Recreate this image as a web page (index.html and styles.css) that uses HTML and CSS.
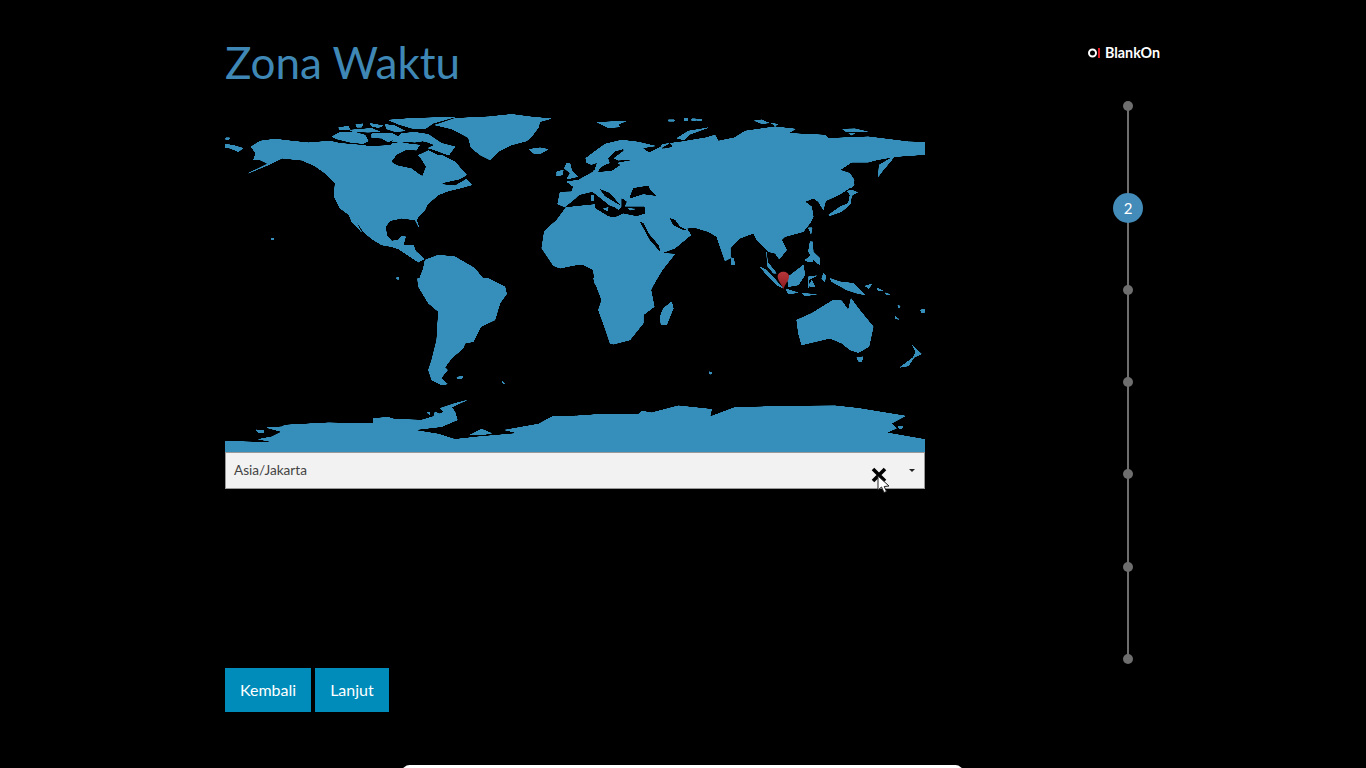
FILE: index.html
```html
<!DOCTYPE html>
<html lang="id">
<head>
<meta charset="utf-8">
<title>Zona Waktu</title>
<link rel="stylesheet" href="styles.css">
</head>
<body>
<div class="page">
  <main class="content">
    <h1 class="title">Zona Waktu</h1>
    <svg class="map" viewBox="0 0 2100 1041" xmlns="http://www.w3.org/2000/svg" role="img" aria-label="Peta dunia">
      <defs>
        <filter id="smooth" filterUnits="userSpaceOnUse" x="0" y="0" width="2100" height="1041" color-interpolation-filters="sRGB">
          <feGaussianBlur stdDeviation="2"/>
          <feColorMatrix type="matrix" values="0 0 0 0 0.212  0 0 0 0 0.557  0 0 0 0 0.733  0 7.2 0 0 -1.5"/>
        </filter>
        <linearGradient id="pinFill" x1="0" y1="0" x2="0" y2="1">
          <stop offset="0" stop-color="#b8373b"/>
          <stop offset="1" stop-color="#8a1a1e"/>
        </linearGradient>
      </defs>
      <g filter="url(#smooth)">
      <rect class="sea" x="-30" y="-30" width="2160" height="1110"/>
      <g class="land">
        <path d="M-20 113 L30 122 L55 130 L40 140 L15 130 L-20 125Z"/>
        <path d="M2 98 L14 98 L12 104 L2 104Z"/>
        <path d="M78 125 L105 108 L150 102 L200 108 L250 113 L315 108 L345 115 L380 118 L430 122 L480 120 L525 112 L560 118 L610 122 L650 150 L690 170 L725 210 L705 222 L660 232 L645 238 L690 242 L725 222 L740 240 L705 250 L670 258 L640 270 L608 298 L600 315 L580 335 L575 345 L582 368 L570 345 L530 340 L495 347 L482 365 L485 390 L500 408 L520 405 L530 392 L542 395 L535 420 L565 420 L572 438 L598 462 L580 472 L555 455 L520 432 L500 425 L470 420 L440 402 L415 380 L385 335 L410 382 L380 350 L372 330 L345 310 L327 275 L330 235 L300 205 L268 182 L230 166 L172 160 L130 180 L70 205 L128 176 L105 165 L85 165 L92 145Z"/>
        <path d="M320 95 L345 82 L390 82 L420 90 L430 108 L415 116 L375 112 L335 102Z"/>
        <path d="M340 68 L370 63 L375 73 L345 75Z"/>
        <path d="M392 58 L415 56 L410 67 L395 67Z"/>
        <path d="M375 75 L440 70 L465 80 L430 82 L385 80Z"/>
        <path d="M435 55 L475 62 L460 68 L440 64Z"/>
        <path d="M490 45 L560 40 L690 36 L625 55 L600 72 L560 70 L520 58Z"/>
        <path d="M480 58 L510 62 L540 78 L510 80 L485 72Z"/>
        <path d="M440 86 L500 84 L520 95 L490 112 L470 100 L440 98Z"/>
        <path d="M500 110 L530 85 L570 82 L610 88 L650 115 L690 125 L672 150 L640 150 L610 125 L595 108 L570 112 L540 110Z"/>
        <path d="M630 60 L690 40 L790 35 L860 28 L915 35 L978 41 L945 50 L940 68 L920 95 L905 108 L860 120 L820 140 L795 165 L765 150 L738 128 L730 98 L680 72Z"/>
        <path d="M912 133 L945 128 L970 133 L945 147 L925 145Z"/>
        <path d="M580 530 L595 490 L600 465 L640 450 L690 455 L750 490 L772 518 L825 540 L580 540Z"/>
        <path d="M1052 305 L1020 311 L995 345 L958 378 L950 430 L985 482 L1005 490 L1052 480Z"/>
        <path d="M139 399 h7 v6 h-7Z M515 517 h7 v6 h-7Z"/>
      </g>
      <g class="water">
        <path d="M500 170 L515 150 L545 135 L575 137 L582 125 L600 110 L625 120 L605 130 L625 135 L665 150 L640 150 L610 135 L590 145 L578 150 L590 165 L602 185 L592 212 L580 205 L560 190 L515 180Z"/>
        <path d="M420 118 L500 112 L498 120 L425 122Z"/>
      </g>
      <g class="land" transform="translate(1050 0)">
        <path d="M65 52 L155 48 L130 58 L135 66 L100 68Z"/>
        <path d="M280 44 h18 v5 h-18Z M328 40 h10 v7 h-10Z M350 41 h12 v6 h-12Z M365 42 h16 v5 h-16Z"/>
        <path d="M538 47 L560 44 L582 54 L560 56Z M588 54 L610 58 L600 63Z"/>
        <path d="M305 100 L340 78 L400 68 L345 88 L328 105Z"/>
        <path d="M802 72 L840 71 L878 80 L845 81 L810 79Z M820 84 L840 85 L830 91Z"/>
        <path d="M-30 307 L-52 297 L-45 261 L-10 260 L-5 245 L-25 230 L10 225 L55 200 L52 180 L35 173 L32 160 L58 140 L90 117 L140 105 L190 111 L240 123 L202 129 L222 143 L258 125 L262 118 L320 110 L392 98 L420 90 L430 108 L478 98 L510 78 L600 65 L662 72 L640 85 L750 90 L760 100 L880 95 L1000 110 L1070 112 L1070 148 L1000 152 L960 155 L905 165 L880 172 L830 172 L795 195 L825 205 L838 240 L795 268 L752 288 L745 315 L730 290 L715 280 L690 290 L710 305 L715 335 L705 355 L685 380 L630 395 L620 405 L635 435 L613 463 L600 445 L580 440 L565 425 L545 405 L535 385 L495 400 L466 430 L466 460 L450 468 L425 395 L400 380 L360 368 L335 370 L348 390 L300 430 L258 445 L195 350 L212 322 L205 338 L115 338Z"/>
        <path d="M-30 300 L60 310 L115 335 L195 335 L258 445 L300 447 L262 495 L235 540 L60 540 L55 495 L25 480 L-2 480Z"/>
        <path d="M575 440 L577 470 L605 505 L595 505 L577 483Z"/>
        <path d="M555 485 L575 495 L625 550 L605 540 L575 510Z"/>
        <path d="M637 517 L685 480 L690 510 L670 540 L640 545Z"/>
        <path d="M468 458 L476 460 L480 480 L468 480Z"/>
        <path d="M700 368 L712 368 L708 387Z"/>
        <path d="M705 410 L713 410 L715 440 L735 460 L735 480 L720 470 L700 440Z"/>
        <path d="M690 465 L712 448 L714 470 L698 470Z"/>
        <path d="M910 215 L912 180 L960 152 L945 172 L925 195Z"/>
        <path d="M824 205 L838 225 L830 250 Z"/>
        <path d="M760 330 L795 305 L820 295 L825 270 L817 258 L830 255 L848 262 L830 272 L826 298 L800 320 L765 332Z"/>
        <path d="M700 515 L725 512 L700 525 L705 545 L720 545 L710 525 L700 550Z"/>
        <path d="M745 505 L752 512 L750 530 L740 522Z"/>
        <path d="M765 520 L795 530 L835 535 L870 570 L845 565 L815 555 L770 530Z"/>
      </g>
      <g class="water" transform="translate(990 75)">
        <path d="M205 58 L180 65 L160 85 L165 100 L150 105 L135 115 L130 125 L170 122 L195 105 L185 98 L228 90 L190 92 L175 85 L205 62Z"/>
        <path d="M110 105 L125 100 L118 120 L110 122Z"/>
        <path d="M30 232 L60 208 L72 196 L112 186 L130 200 L165 228 L178 232 L190 240 L200 232 L200 205 L215 215 L208 230 L268 230 L270 250 L245 258 L205 250 L178 262 L160 258 L122 235 L120 222 L60 228Z"/>
        <path d="M135 178 L165 190 L195 225 L178 215 L150 198Z"/>
        <path d="M225 200 L235 175 L262 170 L280 168 L285 180 L303 197 L265 192 L225 205Z"/>
        <path d="M255 275 L265 280 L280 310 L310 345 L316 365 L285 330Z"/>
        <path d="M345 265 L360 270 L375 290 L395 300 L380 298 L355 285Z"/>
        <path d="M320 55 L345 40 L352 50 L330 55Z"/>
      </g>
      <g class="land" transform="translate(990 75)">
        <path d="M35 100 L45 100 L50 120 L68 140 L35 148 L45 130 L28 115Z"/>
        <path d="M5 125 L25 120 L22 135 L5 138Z"/>
        <path d="M108 195 L116 195 L117 212 L108 212Z"/>
        <path d="M145 236 L160 232 L158 244Z"/>
        <path d="M218 235 L240 237 L225 241Z"/>
      </g>
      <g class="land" transform="translate(0 525)">
        <path d="M578 0 L580 20 L610 70 L640 95 L635 180 L620 240 L610 270 L620 300 L650 315 L668 312 L648 295 L668 270 L660 262 L680 235 L715 205 L720 190 L745 185 L768 140 L810 120 L825 70 L845 42 L840 20 L790 -5 L578 -5Z"/>
        <path d="M695 291 L714 289 L710 297 L698 297Z M831 304 L839 309 L836 313Z"/>
        <path d="M-20 482 L60 485 L155 488 L100 478 L140 470 L170 455 L125 443 L170 440 L180 435 L310 428 L400 430 L445 430 L445 415 L490 412 L510 418 L590 420 L640 405 L655 395 L645 385 L690 370 L725 361 L680 382 L690 395 L697 420 L650 440 L565 450 L640 462 L690 478 L760 470 L880 460 L840 450 L940 432 L985 408 L1052 408 L1052 545 L-20 545Z"/>
        <path d="M735 465 L770 447 L800 460 L770 465Z"/>
        <path d="M92 449 L118 452 L115 459 L98 457Z"/>
        <path d="M606 398 L614 396 L614 405Z M630 395 L645 402 L650 415 L625 412Z"/>
      </g>
      <g class="land" transform="translate(1050 525)">
        <path d="M55 -5 L80 60 L70 90 L90 145 L105 190 L115 193 L165 180 L205 130 L205 105 L238 80 L228 30 L245 -5Z"/>
        <path d="M290 65 L295 85 L275 135 L258 135 L255 110 L265 85Z"/>
        <path d="M665 120 L710 100 L750 75 L775 60 L800 62 L820 90 L828 55 L850 85 L895 140 L882 200 L850 218 L825 210 L800 190 L765 175 L680 195 L670 160Z"/>
        <path d="M845 232 L865 230 L860 245 L850 244Z"/>
        <path d="M1012 195 L1040 222 L1018 232 L1000 258 L975 262 L1015 232 L1022 215Z"/>
        <path d="M402 275 L411 277 L409 283 L402 282Z"/>
        <path d="M632 26 L670 38 L640 42Z M680 40 L725 43 L690 48Z"/>
        <path d="M870 18 L890 12 L882 26Z"/>
        <path d="M905 23 L925 33 L910 32Z M930 38 L945 43 L935 46Z M960 108 L972 118 L960 117Z M1035 90 L1070 83 L1070 94 L1040 98Z M968 76 L976 78 L972 86Z"/>
        <path d="M-2 408 L85 402 L190 402 L200 393 L230 398 L310 377 L410 388 L405 410 L480 382 L660 378 L780 377 L850 385 L992 408 L950 430 L965 445 L935 458 L1070 482 L1070 545 L-2 545Z"/>
        <path d="M970 439 L984 439 L980 446 L972 446Z"/>
      </g>
      </g>
      <path class="pin" transform="translate(1675 500)" d="M0 53 C-5 36 -17 26 -17 15 C-17 -5 17 -5 17 15 C17 26 5 36 0 53Z"/>
    </svg>
    <div class="select">
      <span class="select-value">Asia/Jakarta</span>
      <span class="select-caret"></span>
      <svg class="cursor" viewBox="0 0 22 26" xmlns="http://www.w3.org/2000/svg" aria-hidden="true">
        <path class="cursor-x" d="M2 2 L14 14 M14 2 L2 14"/>
        <path class="cursor-arrow" d="M7 9 L7 23 L10.5 20 L13 25.5 L15.5 24.5 L13.2 19.5 L18 19Z"/>
      </svg>
    </div>
    <div class="actions">
      <button class="button" type="button">Kembali</button>
      <button class="button" type="button">Lanjut</button>
    </div>
  </main>
  <aside class="side">
    <div class="logo">
      <svg class="logo-mark" viewBox="0 0 12 10" xmlns="http://www.w3.org/2000/svg" aria-hidden="true">
        <circle class="logo-ring" cx="4.5" cy="5" r="3.5"/>
        <rect class="logo-bar" x="10" y="0" width="2" height="10"/>
      </svg>
      <span class="logo-text">BlankOn</span>
    </div>
    <ol class="steps">
      <li class="step"><span class="dot"></span></li>
      <li class="step"><span class="current">2</span></li>
      <li class="step"><span class="dot"></span></li>
      <li class="step"><span class="dot"></span></li>
      <li class="step"><span class="dot"></span></li>
      <li class="step"><span class="dot"></span></li>
      <li class="step step-last"><span class="dot"></span></li>
    </ol>
  </aside>
</div>
<div class="dock"></div>
</body>
</html>
```
FILE: styles.css
```css
* { box-sizing: border-box; }
html, body { margin: 0; padding: 0; height: 768px; background: #000; overflow: hidden; }
body { font-family: Lato, "Noto Sans", sans-serif; }
.page { display: flex; padding-left: 225px; height: 768px; }
.content { width: 700px; display: flex; flex-direction: column; }
.title {
  margin: 33px 0 0;
  height: 72px;
  font: 400 44px/58px Lato, sans-serif;
  color: #3f87b5;
}
.map { display: block; width: 700px; height: 347px; }
.sea { fill: #000; }
.land path { fill: #368ebb; stroke: #368ebb; stroke-width: 1.5; stroke-linejoin: round; }
.water path { fill: #000; stroke: #000; stroke-width: 1; stroke-linejoin: round; }
.pin { fill: url(#pinFill); }
.select {
  position: relative;
  display: flex;
  align-items: center;
  justify-content: space-between;
  height: 37px;
  padding: 0 9px 0 8px;
  background: #f2f2f2;
  border: 1px solid #999;
  font: 400 13.6px/1 Lato, sans-serif;
  color: #444;
}
.select-caret {
  width: 0;
  height: 0;
  border: 3px solid transparent;
  border-top: 3px solid #222;
  border-bottom: 0;
}
.cursor { position: absolute; left: 645px; top: 14px; width: 22px; height: 26px; overflow: visible; }
.cursor-x { fill: none; stroke: #000; stroke-width: 3.6; }
.cursor-arrow { fill: #fff; stroke: #222; stroke-width: 1; }
.actions { display: flex; gap: 4px; margin-top: 179px; }
.button {
  height: 44px;
  padding: 0 15px;
  border: 0;
  background: #008cba;
  color: #fff;
  font: 400 16px/44px Lato, sans-serif;
}
.side { width: 72px; margin-left: 163px; display: flex; flex-direction: column; align-items: center; }
.logo { display: flex; align-items: center; gap: 5px; height: 16px; margin-top: 45px; align-self: flex-start; }
.logo-mark { width: 12px; height: 10px; }
.logo-ring { fill: none; stroke: #fff; stroke-width: 2; }
.logo-bar { fill: #e31b23; }
.logo-text { font: 700 14.3px/16px Lato, sans-serif; color: #fff; }
.steps {
  position: relative;
  list-style: none;
  margin: 40px 0 0 8px;
  padding: 0;
  display: flex;
  flex-direction: column;
  align-items: center;
  width: 30px;
}
.steps::before {
  content: "";
  position: absolute;
  left: 14px;
  top: 5px;
  bottom: 5px;
  width: 2px;
  background: #6e6e6e;
}
.step { position: relative; height: 92.11px; display: flex; justify-content: center; align-items: flex-start; }
.step-last { height: 10px; }
.dot { display: block; width: 10px; height: 10px; border-radius: 50%; background: #6e6e6e; }
.current {
  display: block;
  width: 30px;
  height: 30px;
  border-radius: 50%;
  background: #438bb8;
  color: #fff;
  font: 400 15px/30px Lato, sans-serif;
  text-align: center;
}
.dock {
  position: fixed;
  left: 402px;
  bottom: -12px;
  width: 561px;
  height: 15px;
  background: #fff;
  border-radius: 8px;
}
```
